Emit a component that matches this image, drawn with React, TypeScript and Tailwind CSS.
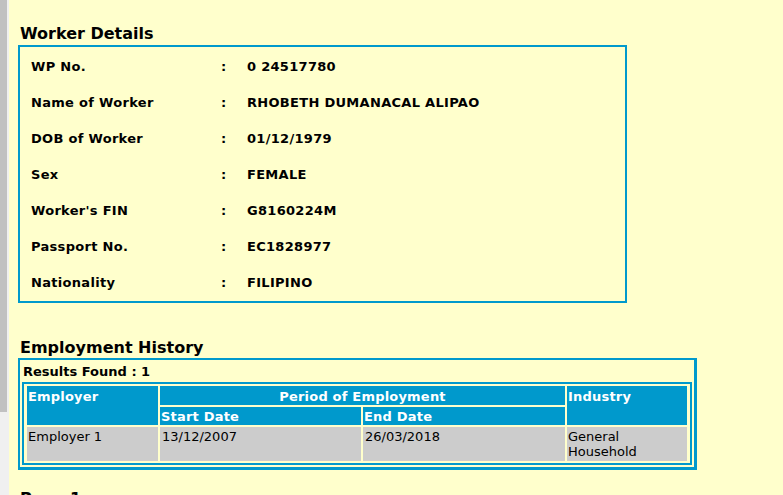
const details = [
  { label: "WP No.", value: "0 24517780" },
  { label: "Name of Worker", value: "RHOBETH DUMANACAL ALIPAO" },
  { label: "DOB of Worker", value: "01/12/1979" },
  { label: "Sex", value: "FEMALE" },
  { label: "Worker's FIN", value: "G8160224M" },
  { label: "Passport No.", value: "EC1828977" },
  { label: "Nationality", value: "FILIPINO" },
];

const history = [
  {
    employer: "Employer 1",
    start: "13/12/2007",
    end: "26/03/2018",
    industry: "General Household",
  },
];

export default function App() {
  return (
    <div
      className="flex h-[495px] w-[783px] overflow-hidden bg-[#ffffcc] text-black"
      style={{ fontFamily: '"DejaVu Sans", Verdana, sans-serif' }}
    >
      {/* scrollbar strip */}
      <div className="w-[9px] shrink-0 bg-[#f0f0f0]">
        <div className="h-[412px] w-[7px] bg-[#c1c1c1]" />
      </div>

      <main className="flex-1 pl-[9px]">
        <h2 className="mt-[24px] pl-[2px] text-[16px] font-bold leading-[20px]">
          Worker Details
        </h2>
        <section className="mt-[1px] w-[609px] border-2 border-[#0099cc] pt-[2px]">
          {details.map((d) => (
            <div
              key={d.label}
              className="grid h-[36px] grid-cols-[190px_26px_1fr] items-center pl-[11px] text-[13px] font-bold leading-[16px] tracking-[0.3px]"
            >
              <span>{d.label}</span>
              <span>:</span>
              <span>{d.value}</span>
            </div>
          ))}
        </section>

        <h2 className="mt-[35px] pl-[2px] text-[16px] font-bold leading-[20px]">
          Employment History
        </h2>
        <section className="w-[679px] border-2 border-r-[3px] border-b-[3px] border-[#0099cc] p-[2px] pt-[3px]">
          <div className="pl-[1px] text-[13px] font-bold leading-[17px]">
            Results Found : 1
          </div>
          <div className="mt-[2px] w-[670px] border-2 border-[#0099cc] p-[2px] pl-[3px]">
            <div className="grid grid-cols-[131px_201px_202px_120px] gap-[2px] text-[13px] leading-[16px]">
              <div className="row-span-2 bg-[#0099cc] pl-[1px] pt-[3px] font-bold tracking-[0.2px] text-white">
                Employer
              </div>
              <div className="col-span-2 h-[19px] bg-[#0099cc] pt-[3px] text-center font-bold tracking-[0.2px] text-white">
                Period of Employment
              </div>
              <div className="row-span-2 bg-[#0099cc] pl-[1px] pt-[3px] font-bold tracking-[0.2px] text-white">
                Industry
              </div>
              <div className="h-[18px] bg-[#0099cc] pl-[1px] pt-[2px] font-bold tracking-[0.2px] text-white">
                Start Date
              </div>
              <div className="h-[18px] bg-[#0099cc] pl-[1px] pt-[2px] font-bold tracking-[0.2px] text-white">
                End Date
              </div>
              {history.map((h) => (
                <>
                  <div key={h.employer + "e"} className="h-[34px] bg-[#cccccc] pl-[1px] pt-[2px] leading-[15px]">
                    {h.employer}
                  </div>
                  <div key={h.employer + "s"} className="bg-[#cccccc] pl-[2px] pt-[2px] leading-[15px]">
                    {h.start}
                  </div>
                  <div key={h.employer + "d"} className="bg-[#cccccc] pl-[2px] pt-[2px] leading-[15px]">
                    {h.end}
                  </div>
                  <div key={h.employer + "i"} className="bg-[#cccccc] pl-[1px] pt-[2px] leading-[15px]">
                    {h.industry}
                  </div>
                </>
              ))}
            </div>
          </div>
        </section>

        <h2 className="mt-[19px] pl-[2px] text-[16px] font-bold leading-[20px]">
          Page 1
        </h2>
      </main>
    </div>
  );
}
